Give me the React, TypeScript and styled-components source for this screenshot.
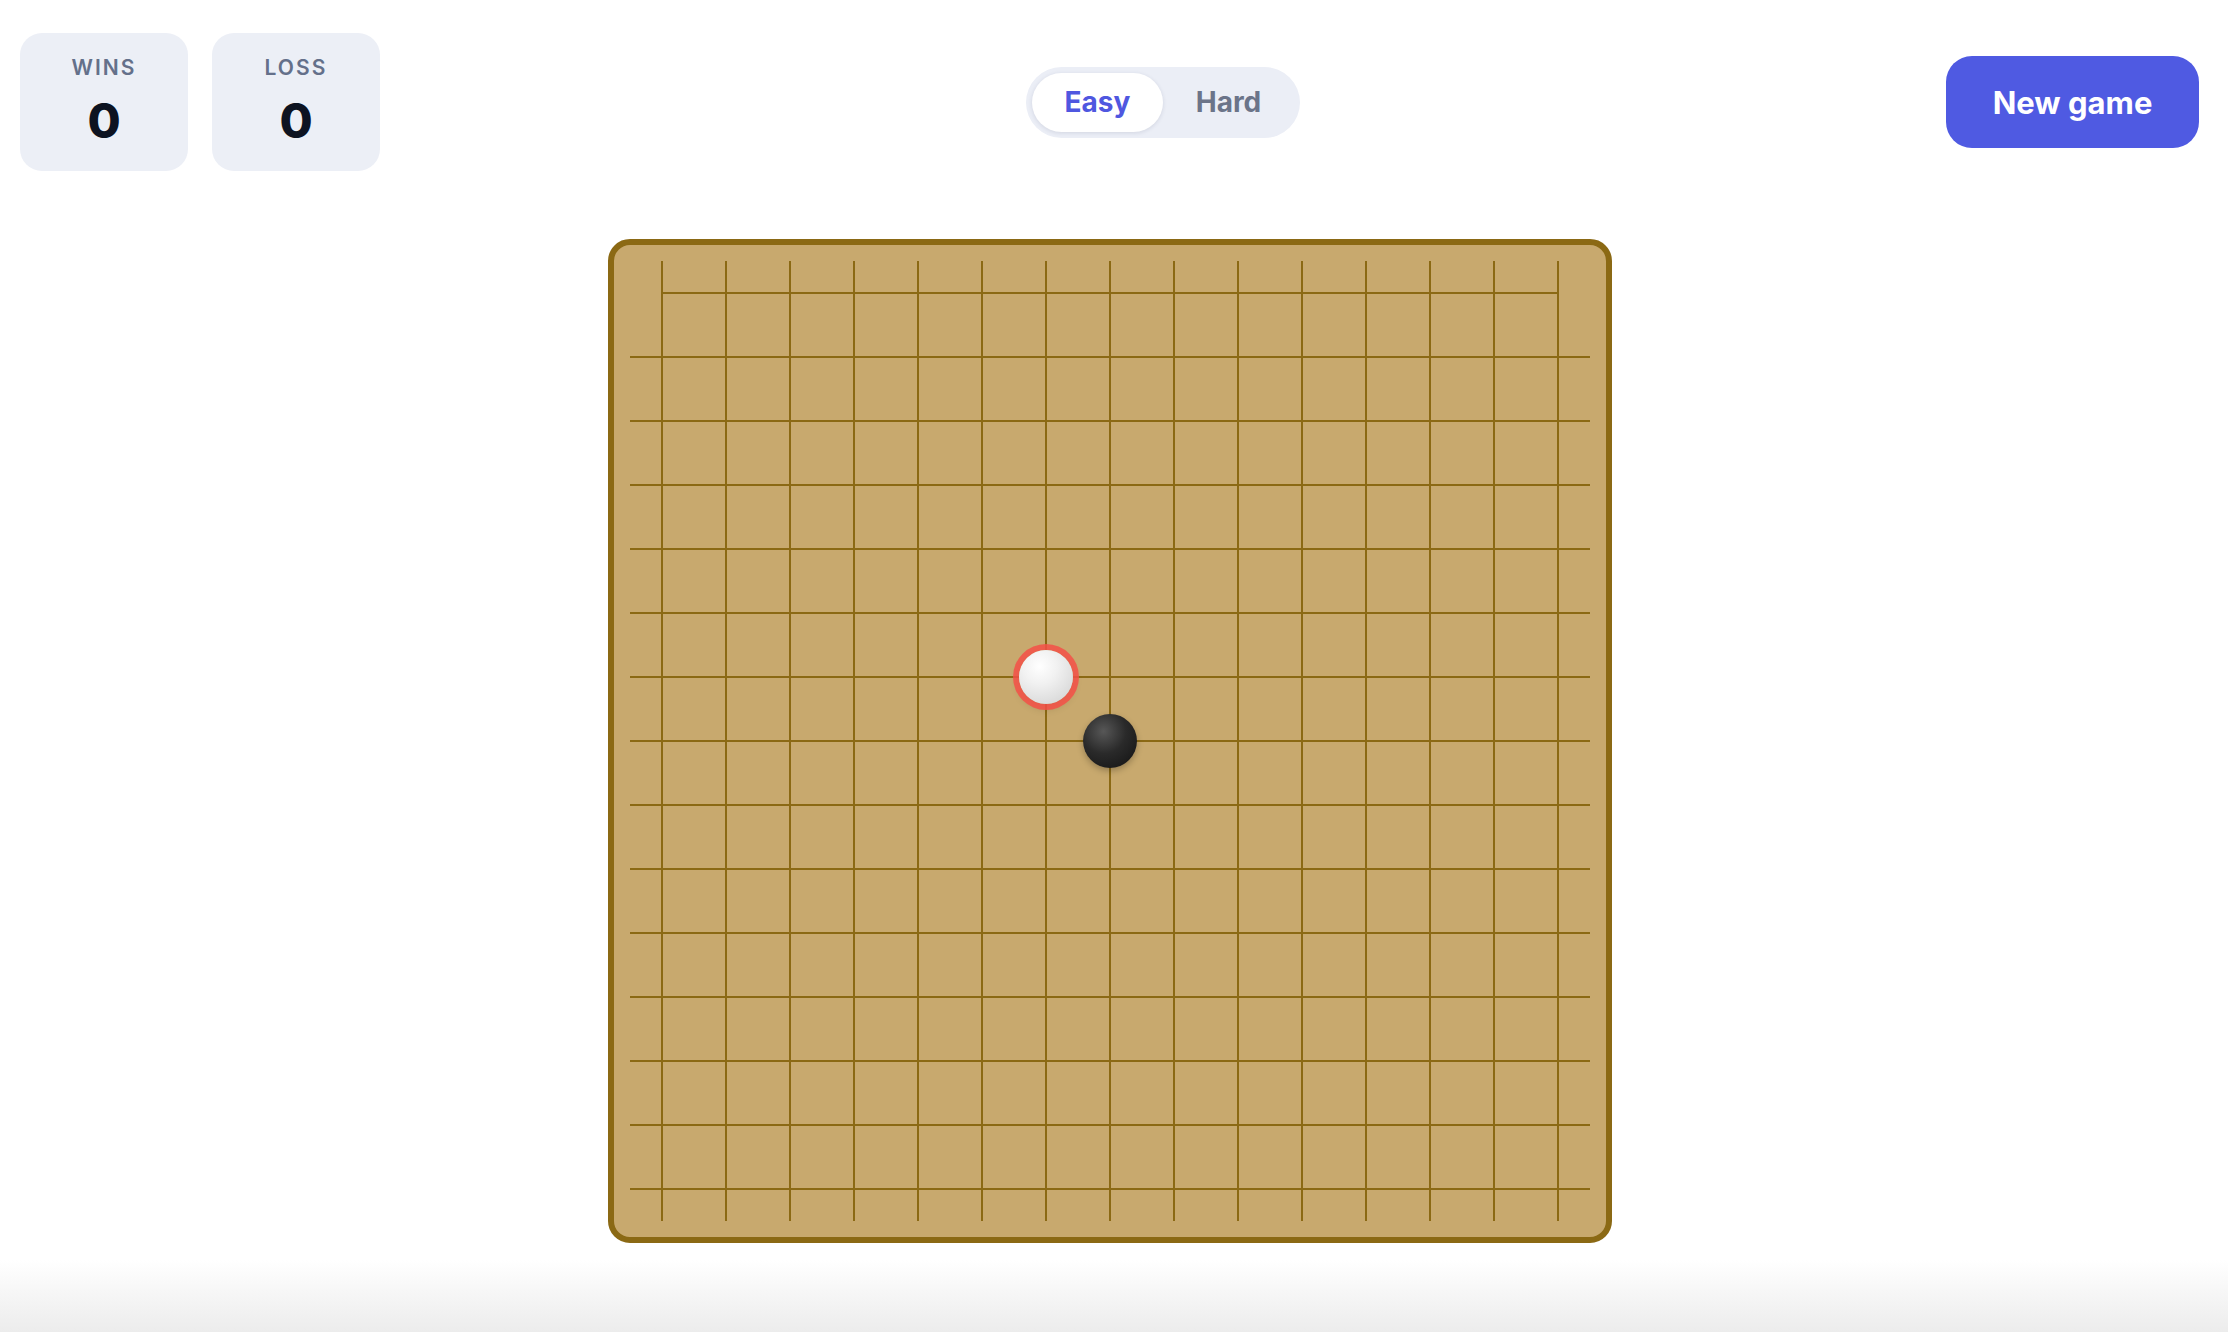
import React, { useState } from 'react';
import styled, { createGlobalStyle, css } from 'styled-components';

const SIZE = 15;
const CELL = 64;

const GlobalStyle = createGlobalStyle`
  * { box-sizing: border-box; }
  html, body {
    margin: 0;
    padding: 0;
    background: #ffffff;
    font-family: Inter, 'Noto Sans', 'Liberation Sans', sans-serif;
  }
`;

const Page = styled.div`
  display: flex;
  flex-direction: column;
  min-height: 100vh;
  padding: 33px 29px 0 20px;
`;

const TopBar = styled.header`
  display: flex;
  align-items: center;
  justify-content: space-between;
`;

const Scores = styled.div`
  display: flex;
  gap: 24px;
`;

const ScoreCard = styled.div`
  display: flex;
  flex-direction: column;
  align-items: center;
  width: 168px;
  height: 138px;
  padding-top: 22px;
  border-radius: 22px;
  background: #eceff6;
`;

const ScoreLabel = styled.span`
  font-size: 21px;
  font-weight: 600;
  letter-spacing: 0.1em;
  color: #64708a;
  line-height: 26px;
`;

const ScoreValue = styled.span`
  margin-top: 14px;
  font-size: 48px;
  font-weight: 800;
  color: #0d1321;
  line-height: 52px;
`;

const Toggle = styled.div`
  display: flex;
  padding: 6px;
  border-radius: 999px;
  background: #ebeef6;
`;

const ToggleButton = styled.button<{ $active: boolean }>`
  width: 131px;
  height: 59px;
  border: 0;
  border-radius: 999px;
  font-family: inherit;
  font-size: 28px;
  font-weight: 700;
  cursor: pointer;
  background: transparent;
  color: #6b7489;

  ${({ $active }) =>
    $active &&
    css`
      background: #ffffff;
      color: #4f57e0;
      box-shadow: 0 1px 4px rgba(30, 40, 80, 0.12);
    `}
`;

const NewGameButton = styled.button`
  width: 253px;
  height: 92px;
  border: 0;
  border-radius: 26px;
  background: #4f5ae2;
  color: #ffffff;
  font-family: inherit;
  font-size: 31px;
  font-weight: 700;
  cursor: pointer;
`;

const BoardWrap = styled.main`
  display: flex;
  justify-content: center;
  margin-top: 68px;
`;

const Board = styled.div`
  display: grid;
  grid-template-columns: repeat(${SIZE}, ${CELL}px);
  grid-template-rows: repeat(${SIZE}, ${CELL}px);
  padding: 16px;
  border: 6px solid #8b6914;
  border-radius: 22px;
  background: #c8a96e;
`;

const Cell = styled.div<{ $row: number; $col: number }>`
  position: relative;
  cursor: pointer;

  &::before {
    content: '';
    position: absolute;
    top: calc(50% - 1px);
    height: 2px;
    left: 0;
    right: 0;
    background: #8b6914;
    ${({ $row, $col }) =>
      $row === 0 &&
      css`
        left: ${$col === 0 ? 'calc(50% - 1px)' : '0'};
        right: ${$col === SIZE - 1 ? 'calc(50% - 1px)' : '0'};
      `}
  }

  &::after {
    content: '';
    position: absolute;
    left: calc(50% - 1px);
    width: 2px;
    top: 0;
    bottom: 0;
    background: #8b6914;
  }
`;

const Stone = styled.div<{ $color: 'black' | 'white'; $last?: boolean }>`
  position: absolute;
  z-index: 2;
  top: 50%;
  left: 50%;
  width: 54px;
  height: 54px;
  margin: -27px 0 0 -27px;
  border-radius: 50%;

  ${({ $color }) =>
    $color === 'black'
      ? css`
          background: radial-gradient(circle at 38% 32%, #575757 0%, #2a2a2a 45%, #111111 100%);
          box-shadow: 0 3px 6px rgba(0, 0, 0, 0.25);
        `
      : css`
          background: radial-gradient(circle at 38% 30%, #ffffff 0%, #f1f1f1 35%, #cfcfcf 100%);
          box-shadow: 0 3px 6px rgba(0, 0, 0, 0.2);
        `}

  ${({ $last }) =>
    $last &&
    css`
      box-shadow: 0 0 0 6px rgba(244, 80, 72, 0.85), 0 4px 10px rgba(0, 0, 0, 0.18);
    `}
`;

const Fade = styled.div`
  margin-top: auto;
  margin-left: -20px;
  margin-right: -29px;
  height: 72px;
  background: linear-gradient(to bottom, rgba(255, 255, 255, 0), #ececec);
`;

type StoneInfo = { color: 'black' | 'white'; last?: boolean };

const initialStones: Record<string, StoneInfo> = {
  '6-6': { color: 'white', last: true },
  '7-7': { color: 'black' },
};

export default function App() {
  const [level, setLevel] = useState<'easy' | 'hard'>('easy');
  const [stones, setStones] = useState(initialStones);
  const [wins] = useState(0);
  const [losses] = useState(0);

  const cells = [];
  for (let r = 0; r < SIZE; r++) {
    for (let c = 0; c < SIZE; c++) {
      const s = stones[`${r}-${c}`];
      cells.push(
        <Cell key={`${r}-${c}`} $row={r} $col={c}>
          {s && <Stone $color={s.color} $last={s.last} />}
        </Cell>
      );
    }
  }

  return (
    <>
      <GlobalStyle />
      <Page>
        <TopBar>
          <Scores>
            <ScoreCard>
              <ScoreLabel>WINS</ScoreLabel>
              <ScoreValue>{wins}</ScoreValue>
            </ScoreCard>
            <ScoreCard>
              <ScoreLabel>LOSS</ScoreLabel>
              <ScoreValue>{losses}</ScoreValue>
            </ScoreCard>
          </Scores>
          <Toggle>
            <ToggleButton $active={level === 'easy'} onClick={() => setLevel('easy')}>
              Easy
            </ToggleButton>
            <ToggleButton $active={level === 'hard'} onClick={() => setLevel('hard')}>
              Hard
            </ToggleButton>
          </Toggle>
          <NewGameButton onClick={() => setStones(initialStones)}>New game</NewGameButton>
        </TopBar>
        <BoardWrap>
          <Board>{cells}</Board>
        </BoardWrap>
        <Fade />
      </Page>
    </>
  );
}
